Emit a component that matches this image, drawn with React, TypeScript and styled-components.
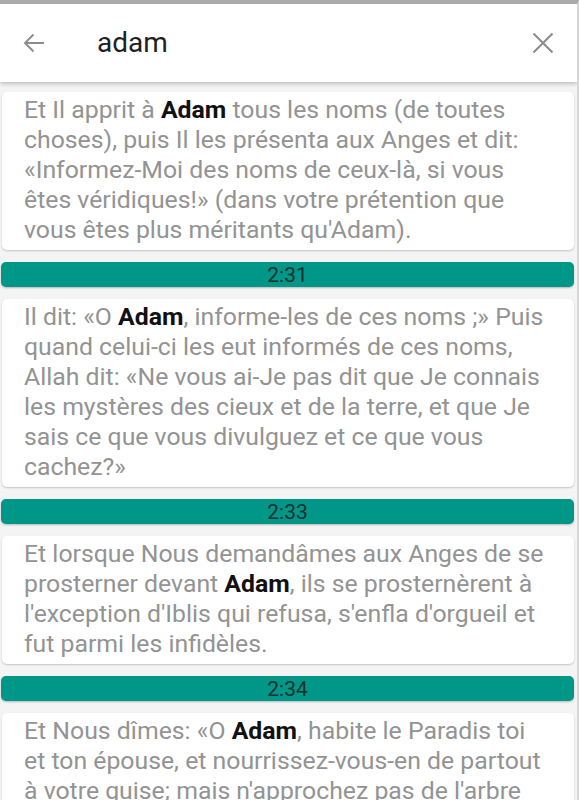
import React from 'react';
import styled, { createGlobalStyle } from 'styled-components';

const GlobalStyle = createGlobalStyle`
  html, body {
    margin: 0;
    padding: 0;
    background: #f4f4f4;
    font-family: Roboto, "Noto Sans", sans-serif;
  }
`;

type Verse = {
  ref: string | null;
  before: string;
  after: string;
};

const verses: Verse[] = [
  {
    ref: null,
    before: 'Et Il apprit à ',
    after: ' tous les noms (de toutes choses), puis Il les présenta aux Anges et dit: «Informez-Moi des noms de ceux-là, si vous êtes véridiques!» (dans votre prétention que vous êtes plus méritants qu\'Adam).'
  },
  {
    ref: '2:31',
    before: 'Il dit: «O ',
    after: ', informe-les de ces noms ;» Puis quand celui-ci les eut informés de ces noms, Allah dit: «Ne vous ai-Je pas dit que Je connais les mystères des cieux et de la terre, et que Je sais ce que vous divulguez et ce que vous cachez?»'
  },
  {
    ref: '2:33',
    before: 'Et lorsque Nous demandâmes aux Anges de se prosterner devant ',
    after: ', ils se prosternèrent à l\'exception d\'Iblis qui refusa, s\'enfla d\'orgueil et fut parmi les infidèles.'
  },
  {
    ref: '2:34',
    before: 'Et Nous dîmes: «O ',
    after: ', habite le Paradis toi et ton épouse, et nourrissez-vous-en de partout à votre guise; mais n\'approchez pas de l\'arbre que voici: sinon vous seriez du nombre des injustes.»'
  }
];

const App = () => {
  return (
    <Screen>
      <GlobalStyle />
      <Header>
        <IconButton aria-label="back">
          <svg width="24" height="24" viewBox="0 0 24 24">
            <path d="M22 12H3M11.5 3.5L3 12l8.5 8.5" fill="none" stroke="#8c8c8c" strokeWidth="1.9" />
          </svg>
        </IconButton>
        <Query>adam</Query>
        <IconButton aria-label="clear">
          <svg width="24" height="24" viewBox="0 0 24 24">
            <path d="M2.5 2.5l19 19M21.5 2.5l-19 19" fill="none" stroke="#8c8c8c" strokeWidth="2.1" />
          </svg>
        </IconButton>
      </Header>
      <List>
        {verses.map((v, idx) => (
          <React.Fragment key={`verse-${idx}`}>
            {v.ref && <RefBar>{v.ref}</RefBar>}
            <Card>
              {v.before}
              <Match>Adam</Match>
              {v.after}
            </Card>
          </React.Fragment>
        ))}
      </List>
    </Screen>
  );
};

const Screen = styled.div`
  width: 579px;
  height: 800px;
  overflow: hidden;
  box-sizing: border-box;
  border-top: 4px solid #ababab;
  border-right: 2px solid #d6d6d6;
  background: #f4f4f4;
  display: flex;
  flex-direction: column;
`;

const Header = styled.div`
  height: 78px;
  flex-shrink: 0;
  background: #ffffff;
  display: flex;
  align-items: center;
  padding: 0 22px 0 22px;
  box-shadow: 0 2px 4px rgba(0, 0, 0, 0.22);
  position: relative;
  z-index: 1;
`;

const IconButton = styled.div`
  width: 24px;
  height: 24px;
  display: flex;
  justify-content: center;
  align-items: center;
`;

const Query = styled.div`
  flex: 1;
  margin-left: 51px;
  font-size: 28px;
  color: #1f1f1f;
  padding-bottom: 2px;
`;

const List = styled.div`
  display: flex;
  flex-direction: column;
  gap: 12px;
  padding: 10px 3px 0 1px;
`;

const Card = styled.div`
  background: #ffffff;
  border-radius: 5px;
  margin: 0 0 0 1px;
  padding: 3px 23px 5px 22px;
  font-size: 24.8px;
  line-height: 30px;
  color: #939393;
  box-shadow: 0 1px 2px rgba(0, 0, 0, 0.2);
`;

const Match = styled.b`
  color: #111111;
  font-weight: 700;
`;

const RefBar = styled.div`
  height: 25px;
  background: #009688;
  border-radius: 5px;
  display: flex;
  justify-content: center;
  align-items: center;
  font-size: 21px;
  color: #17302d;
  box-shadow: 0 1px 2px rgba(0, 0, 0, 0.25);
`;

export default App;
